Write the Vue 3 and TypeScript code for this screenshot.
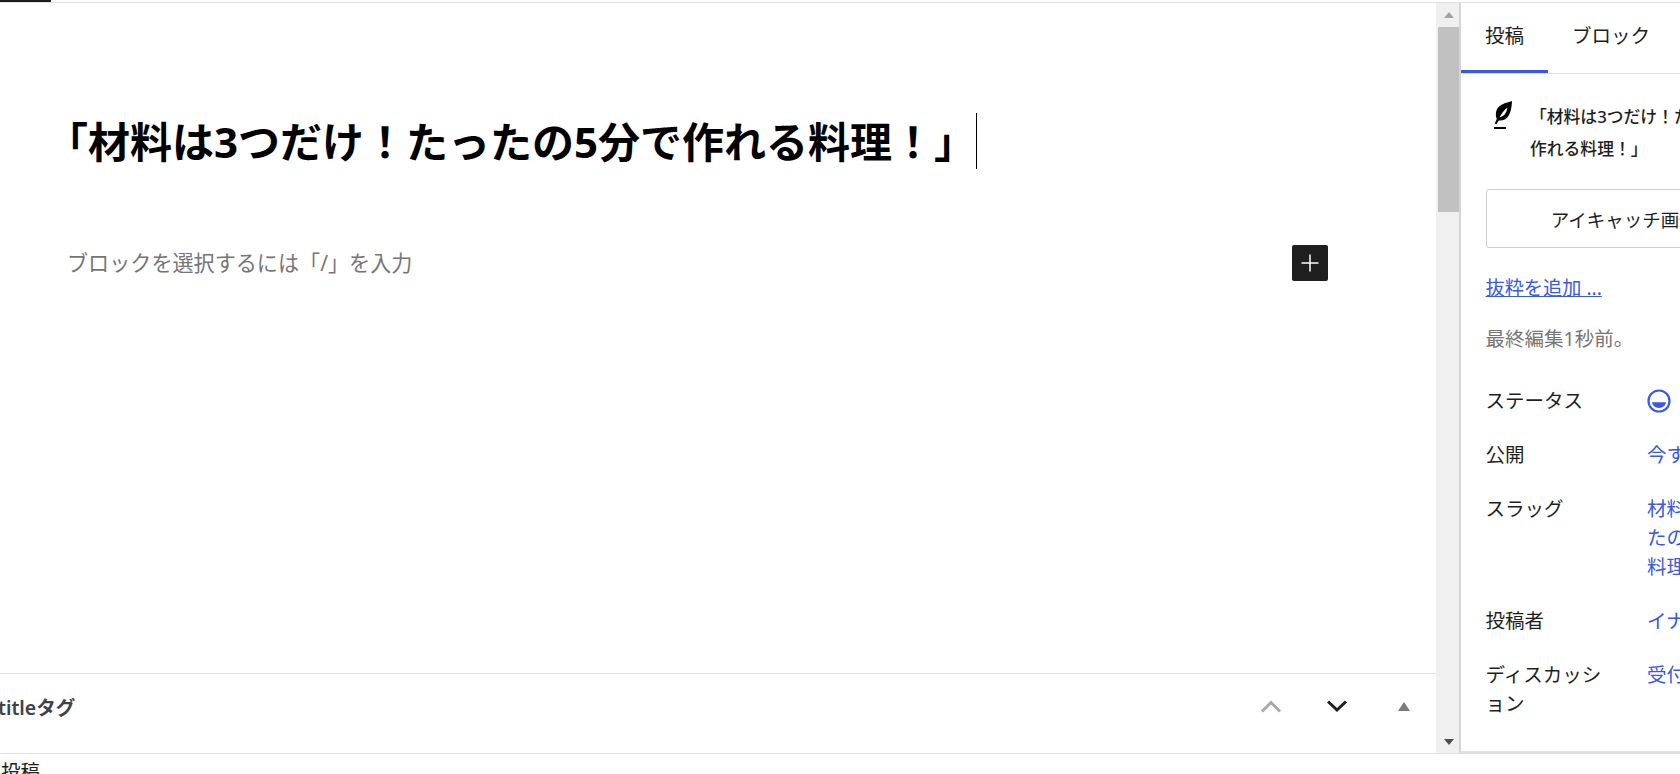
<script setup lang="ts">
const metaRows = [
  { label: '公開', lines: ['今すぐ公開'] },
  { label: 'スラッグ', lines: ['材料は3つだけ！たっ', 'たの5分で作れる', '料理'] },
  { label: '投稿者', lines: ['イナ'] },
  { label: 'ディスカッション', lines: ['受付中'] },
]
</script>

<template>
  <div class="page">
    <div class="top-strip"><div class="top-tab"></div></div>

    <div class="workspace">
      <main class="editor">
        <div class="canvas">
          <h1 class="post-title"><span class="title-text">「材料は3つだけ！たったの5分で作れる料理！」</span><span class="caret"></span></h1>
          <div class="block-row">
            <p class="placeholder">ブロックを選択するには「/」を入力</p>
            <button class="add-block" aria-label="ブロックを追加">
              <svg width="24" height="24" viewBox="0 0 24 24"><path d="M11.25 3.5h1.5v7.75h7.75v1.5h-7.75v7.75h-1.5v-7.75H3.5v-1.5h7.75z" fill="#fff" /></svg>
            </button>
          </div>
        </div>
        <div class="meta-box">
          <h2 class="meta-title">titleタグ</h2>
          <div class="meta-controls">
            <svg class="ctl-up" width="24" height="14" viewBox="0 0 24 14"><path d="M3 12.5 12 3.5l9 9" fill="none" stroke="#a9a9a9" stroke-width="3" /></svg>
            <svg class="ctl-down" width="24" height="14" viewBox="0 0 24 14"><path d="M3 2.5l9 8.5 9-8.5" fill="none" stroke="#1e1e1e" stroke-width="3" /></svg>
            <span class="ctl-toggle"></span>
          </div>
        </div>
      </main>

      <div class="scrollbar">
        <div class="arrow"><span class="tri-up"></span></div>
        <div class="thumb"></div>
        <div class="track-rest"></div>
        <div class="arrow arrow-end"><span class="tri-down"></span></div>
      </div>

      <aside class="sidebar">
        <div class="tabs">
          <div class="tab active">投稿</div>
          <div class="tab">ブロック</div>
        </div>
        <div class="panel">
          <div class="post-card">
            <svg class="feather" width="20" height="28" viewBox="0 0 20 28">
              <path d="M19 0C13 2 6.500 3 3.800 8.500 2.500 12 2.600 15.500 3.800 18L1.800 22.500l1.700.8L5.800 19.500C13 20.500 18.500 15 19 0zM14.500 6.500C10.500 9 8.500 13 6.500 16.500 10.500 15.500 13.500 12.500 14.500 6.500z" fill="#000" fill-rule="evenodd" />
              <rect x="1" y="26" width="12" height="2" fill="#000" />
            </svg>
            <div class="post-name">「材料は3つだけ！たったの5分で<br />作れる料理！」</div>
          </div>
          <button class="featured">アイキャッチ画像を設定</button>
          <a class="excerpt">抜粋を追加 ...</a>
          <p class="edited">最終編集1秒前。</p>

          <div class="row status-row">
            <div class="label">ステータス</div>
            <div class="value">
              <svg class="status-icon" width="24" height="24" viewBox="0 0 24 24">
                <circle cx="12" cy="12" r="10.500" fill="none" stroke="#3858e9" stroke-width="2.200" />
                <path d="M5 13.200h14a7 5.800 0 0 1-14 0z" fill="#3858e9" />
              </svg>
            </div>
          </div>
          <div v-for="row in metaRows" :key="row.label" class="row">
            <div class="label">{{ row.label }}</div>
            <div class="value">
              <div v-for="line in row.lines" :key="line">{{ line }}</div>
            </div>
          </div>
        </div>
      </aside>
    </div>

    <div class="footer-bar">投稿</div>
  </div>
</template>

<style scoped>
.page {
  height: 774px;
  width: 1680px;
  overflow: hidden;
  display: flex;
  flex-direction: column;
  background: #fff;
  color: #1e1e1e;
  font-family: "Noto Sans", "Noto Sans CJK JP", sans-serif;
}

.top-strip {
  height: 2px;
  border-bottom: 1px solid #e0e0e0;
  flex-shrink: 0;
}

.top-tab {
  width: 51px;
  height: 2px;
  background: #1e1e1e;
}

.workspace {
  display: flex;
  height: 750px;
  flex-shrink: 0;
}

.editor {
  width: 1436px;
  flex-shrink: 0;
  display: flex;
  flex-direction: column;
}

.canvas {
  flex: 1;
  padding: 111px 0 0 46px;
}

.post-title {
  margin: 0;
  font-size: 42px;
  font-weight: 700;
  line-height: 56px;
  color: #000;
  white-space: nowrap;
  display: flex;
  align-items: center;
}

.title-text {
  width: 930px;
}

.caret {
  display: block;
  width: 1px;
  height: 56px;
  margin-top: -2px;
  background: #000;
}

.block-row {
  display: flex;
  align-items: center;
  justify-content: space-between;
  width: 1282px;
  margin-top: 75px;
  padding-left: 21px;
  box-sizing: border-box;
}

.placeholder {
  margin: 0 0 3px;
  font-size: 21.1px;
  font-weight: 400;
  color: #757575;
}

.add-block {
  width: 36px;
  height: 36px;
  padding: 0;
  border: none;
  border-radius: 2px;
  background: #1e1e1e;
  display: flex;
  align-items: center;
  justify-content: center;
}

.meta-box {
  height: 80px;
  box-sizing: border-box;
  border-top: 1px solid #e0e0e0;
  display: flex;
  align-items: center;
  justify-content: space-between;
  padding: 0 26px 15px 0;
}

.meta-title {
  margin: 0 0 0 -2px;
  font-size: 19.5px;
  font-weight: 600;
  color: #3c434a;
}

.meta-controls {
  display: flex;
  align-items: center;
  gap: 41px;
}

.ctl-up {
  margin-right: 1px;
}

.ctl-toggle {
  width: 0;
  height: 0;
  margin-left: 8px;
  border-left: 6px solid transparent;
  border-right: 6px solid transparent;
  border-bottom: 9px solid #787c82;
}

.scrollbar {
  width: 23px;
  flex-shrink: 0;
  background: #f0f0f0;
  display: flex;
  flex-direction: column;
}

.arrow {
  height: 24px;
  display: flex;
  align-items: center;
  justify-content: center;
  padding-left: 2px;
}

.arrow-end {
  height: 17px;
  padding-bottom: 6px;
  box-sizing: border-box;
}

.tri-up,
.tri-down {
  width: 0;
  height: 0;
  border-left: 5.500px solid transparent;
  border-right: 5.500px solid transparent;
}

.tri-up {
  border-bottom: 6px solid #a3a3a3;
}

.tri-down {
  border-top: 6px solid #505050;
}

.thumb {
  height: 185px;
  margin-left: 2px;
  background: #c1c1c1;
}

.track-rest {
  flex: 1;
}

.sidebar {
  width: 221px;
  flex-shrink: 0;
  overflow: hidden;
  border-left: 2px solid #d5d5d5;
  border-bottom: 2px solid #e0e0e0;
  box-sizing: border-box;
  height: 750px;
}

.tabs {
  display: flex;
  height: 70px;
  border-bottom: 1px solid #e0e0e0;
  box-sizing: content-box;
}

.tab {
  padding: 0 24px;
  font-size: 19.5px;
  line-height: 66px;
  white-space: nowrap;
  color: #1e1e1e;
}

.tab.active {
  width: 39px;
  height: 70px;
  box-shadow: inset 0 -3px 0 #3858e9;
}

.panel {
  width: 370px;
  padding: 26px 0 0 24.5px;
  box-sizing: border-box;
}

.post-card {
  display: flex;
  gap: 17px;
  white-space: nowrap;
}

.feather {
  flex-shrink: 0;
  margin-left: 7.5px;
  margin-top: 1px;
}

.post-name {
  font-size: 16.8px;
  font-weight: 500;
  line-height: 32px;
  margin-top: 1px;
}

.featured {
  display: block;
  width: 333px;
  height: 59px;
  margin-top: 24px;
  background: #fff;
  border: 1px solid #ccc;
  border-radius: 3px;
  font: inherit;
  font-size: 18.5px;
  color: #1e1e1e;
}

.excerpt {
  display: block;
  margin-top: 25px;
  font-size: 19.2px;
  line-height: 30px;
  color: #3858e9;
  text-decoration: underline;
}

.edited {
  margin: 21px 0 0;
  font-size: 19.5px;
  line-height: 30px;
  color: #757575;
}

.row {
  display: flex;
  font-size: 19.5px;
  line-height: 29px;
  margin-top: 25px;
}

.status-row {
  margin-top: 32px;
  align-items: center;
}

.status-row .value {
  display: flex;
}

.label {
  width: 120px;
  margin-right: 41.5px;
  flex-shrink: 0;
}

.value {
  color: #3858e9;
  white-space: nowrap;
}

.footer-bar {
  height: 21px;
  border-top: 1px solid #e0e0e0;
  font-size: 19.5px;
  line-height: 36px;
  color: #1e1e1e;
  padding-left: 1px;
}
</style>
